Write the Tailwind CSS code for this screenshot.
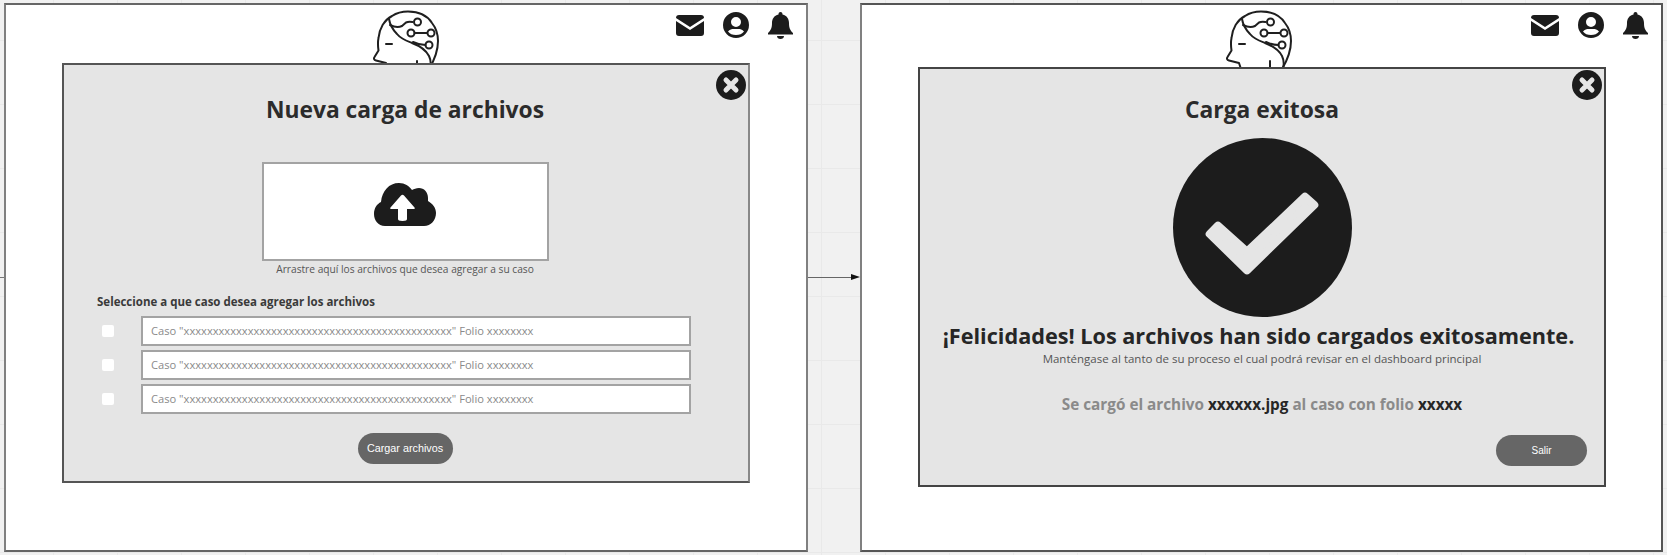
<!DOCTYPE html>
<html lang="es">
<head>
  <meta charset="UTF-8" />
  <title>Carga de archivos</title>
  <script src="https://cdn.jsdelivr.net/npm/@tailwindcss/browser@4"></script>
</head>
<body class="h-[555px] w-[1667px] overflow-hidden bg-[#f1f1f1] bg-[linear-gradient(#e9e9e9_1px,transparent_1px),linear-gradient(90deg,#e9e9e9_1px,transparent_1px)] bg-size-[64px_64px] bg-position-[53px_40px] font-['Open_Sans',sans-serif] text-[#1f1f1f]">

  <svg class="hidden">
    <symbol id="brain" viewBox="370 8 72 60" fill="none" stroke="currentColor" stroke-width="2" stroke-linecap="round" stroke-linejoin="round">
      <path d="M388 68 L386 62 L376 59.500 C374 59 373.500 57.500 374.500 56 L378.500 49.500 C378 46 377.500 42 378.500 37 C379.500 28 384 19 392 15 C396.500 12 402 10.500 408 10.500 C418 10.500 427 14 432 22 C436 27 438 33 438 40 C438 50 435 58 429 68" />
      <path d="M389 18 C390 24 393 29 397 33 C401 38 407 40 412 42 C420 45 426 49 429 55 C431 59 431 64 430 68" />
      <path d="M390 24 C394 26 398 27 402 25 L406 21.500 C408 20.500 410 20.500 412.500 21" />
      <circle cx="417.500" cy="21" r="3.500" fill="white" />
      <circle cx="411" cy="32" r="3.500" fill="white" />
      <path d="M414.500 32 H427.500" />
      <circle cx="431" cy="32" r="3.500" fill="white" />
      <circle cx="429" cy="44" r="3.500" fill="white" />
      <path d="M425.500 44 C421 44 417 43 413 41" />
      <path d="M386 43 H392" />
      <path d="M417 60 V68" />
    </symbol>
    <symbol id="close" viewBox="0 0 30 30">
      <circle cx="15" cy="15" r="15" fill="#1c1c1c" />
      <path d="M10 10 L20 20 M20 10 L10 20" stroke="#e5e5e5" stroke-width="5" stroke-linecap="round" />
    </symbol>
  </svg>

  <div class="relative flex h-full pt-[3px] pl-1">
    <div class="absolute left-0 top-[277px] h-px w-1 bg-[#777]"></div>

    <!-- Pantalla 1 -->
    <section class="relative h-[549px] w-[804px] shrink-0 border-2 border-[#666] border-x-[#808080] bg-white">
      <svg class="absolute left-[364px] top-[4px] h-[60px] w-[72px]"><use href="#brain" /></svg>

      <div class="absolute right-[13px] top-[7px] flex items-start gap-[19px] text-[#1c1c1c]">
        <svg class="mt-[3px] h-[21px] w-[28px]" viewBox="0 0 28 21" fill="currentColor"><path d="M3 0 H25 C27 0 28 1 28 3 L14 12 L0 3 C0 1 1 0 3 0 Z M0 6 L14 15 L28 6 V18 C28 20 27 21 25 21 H3 C1 21 0 20 0 18 Z" /></svg>
        <svg class="h-[26px] w-[26px]" viewBox="0 0 26 26" fill="currentColor"><path fill-rule="evenodd" d="M13 0 A13 13 0 1 0 13 26 A13 13 0 1 0 13 0 Z M13 5 A5 5 0 1 1 13 15 A5 5 0 1 1 13 5 Z M13 23 C9.5 23 6.8 21.6 5 19.4 C6.6 17.6 9 17 10.5 17 H15.5 C17 17 19.4 17.6 21 19.4 C19.200 21.6 16.5 23 13 23 Z" /></svg>
        <svg class="h-[27px] w-[25px]" viewBox="0 0 25 27" fill="currentColor"><path d="M12.500 0 C14 0 14.500 1 14.500 2.500 C19 3.500 21 7 21 11 C21 16 22 18 25 21 V22.500 H0 V21 C3 18 4 16 4 11 C4 7 6 3.500 10.500 2.500 C10.500 1 11 0 12.500 0 Z M9 24 H16 C16 26 14.500 27 12.500 27 C10.500 27 9 26 9 24 Z" /></svg>
      </div>

      <div class="absolute left-[56px] top-[58px] flex h-[420px] w-[688px] flex-col items-center border-2 border-[#555] border-r-[#888] bg-[#e5e5e5] pr-[2px]">
        <svg class="absolute right-[2px] top-[5px] h-[30px] w-[30px]"><use href="#close" /></svg>
        <h2 class="mt-[29px] text-[22.8px] leading-[32px] font-bold text-[#2b2b2b]">Nueva carga de archivos</h2>

        <div class="mt-[36px] flex h-[99px] w-[287px] items-center justify-center border-2 border-[#a3a3a3] bg-white">
          <svg class="mb-[15px] h-[43px] w-[62px]" viewBox="0 0 62 43" fill="#1c1c1c">
            <path d="M11 43 C4 43 0 37 0 31 C0 25 3 21 7 19 C8 8 15 0 25 0 C31 0 35 3 38 7 C40 6 42 5 45 5 C50 5 54 9 54 15 C54 16 54 17 54 18 C59 21 62 25 62 30 C62 37 57 43 50 43 Z" />
            <path fill="white" d="M24 36 V26 H17 C16 26 16 25 16.500 24.500 L27 12.500 C28 11.500 29 11.500 30 12.500 L40.500 24.500 C41 25 41 26 40 26 H33 V36 C33 37 32 38 28.500 38 C25 38 24 37 24 36 Z" />
          </svg>
        </div>
        <p class="mt-[1px] text-[10.2px] leading-[14px] text-[#555]">Arrastre aquí los archivos que desea agregar a su caso</p>

        <div class="mt-[18px] w-full pl-[33px]">
          <p class="text-[11.5px] leading-[16px] font-bold text-[#3a3a3a]">Seleccione a que caso desea agregar los archivos</p>
          <div class="mt-[6px] flex flex-col gap-[4px]">
            <div class="flex items-center">
              <span class="ml-[5px] h-[12px] w-[12px] rounded-[2px] bg-white"></span>
              <div class="ml-[27px] flex h-[30px] w-[550px] items-center border-2 border-[#a3a3a3] bg-white pl-[8px] text-[11.15px] text-[#8a8a8a]">Caso "xxxxxxxxxxxxxxxxxxxxxxxxxxxxxxxxxxxxxxxxxxxxxx" Folio xxxxxxxx</div>
            </div>
            <div class="flex items-center">
              <span class="ml-[5px] h-[12px] w-[12px] rounded-[2px] bg-white"></span>
              <div class="ml-[27px] flex h-[30px] w-[550px] items-center border-2 border-[#a3a3a3] bg-white pl-[8px] text-[11.15px] text-[#8a8a8a]">Caso "xxxxxxxxxxxxxxxxxxxxxxxxxxxxxxxxxxxxxxxxxxxxxx" Folio xxxxxxxx</div>
            </div>
            <div class="flex items-center">
              <span class="ml-[5px] h-[12px] w-[12px] rounded-[2px] bg-white"></span>
              <div class="ml-[27px] flex h-[30px] w-[550px] items-center border-2 border-[#a3a3a3] bg-white pl-[8px] text-[11.15px] text-[#8a8a8a]">Caso "xxxxxxxxxxxxxxxxxxxxxxxxxxxxxxxxxxxxxxxxxxxxxx" Folio xxxxxxxx</div>
            </div>
          </div>
        </div>

        <button class="mt-[19px] h-[31px] w-[95px] rounded-full bg-[#666] font-['Liberation_Sans',sans-serif] text-[10.8px] text-white">Cargar archivos</button>
      </div>
    </section>

    <!-- Flecha -->
    <div class="flex w-[52px] shrink-0 items-start pt-[274px]">
      <div class="h-px w-[43px] bg-[#666]"></div>
      <div class="mt-[-3px] h-0 w-0 border-y-[3.5px] border-l-[9px] border-y-transparent border-l-[#111]"></div>
    </div>

    <!-- Pantalla 2 -->
    <section class="relative h-[549px] w-[803px] shrink-0 border-2 border-[#555] border-l-[#808080] bg-white">
      <svg class="absolute left-[361px] top-[4px] h-[60px] w-[72px]"><use href="#brain" /></svg>

      <div class="absolute right-[13px] top-[7px] flex items-start gap-[19px] text-[#1c1c1c]">
        <svg class="mt-[3px] h-[21px] w-[28px]" viewBox="0 0 28 21" fill="currentColor"><path d="M3 0 H25 C27 0 28 1 28 3 L14 12 L0 3 C0 1 1 0 3 0 Z M0 6 L14 15 L28 6 V18 C28 20 27 21 25 21 H3 C1 21 0 20 0 18 Z" /></svg>
        <svg class="h-[26px] w-[26px]" viewBox="0 0 26 26" fill="currentColor"><path fill-rule="evenodd" d="M13 0 A13 13 0 1 0 13 26 A13 13 0 1 0 13 0 Z M13 5 A5 5 0 1 1 13 15 A5 5 0 1 1 13 5 Z M13 23 C9.5 23 6.8 21.6 5 19.4 C6.6 17.6 9 17 10.5 17 H15.5 C17 17 19.4 17.6 21 19.4 C19.200 21.6 16.5 23 13 23 Z" /></svg>
        <svg class="h-[27px] w-[25px]" viewBox="0 0 25 27" fill="currentColor"><path d="M12.500 0 C14 0 14.500 1 14.500 2.500 C19 3.500 21 7 21 11 C21 16 22 18 25 21 V22.500 H0 V21 C3 18 4 16 4 11 C4 7 6 3.500 10.500 2.500 C10.500 1 11 0 12.500 0 Z M9 24 H16 C16 26 14.500 27 12.500 27 C10.500 27 9 26 9 24 Z" /></svg>
      </div>

      <div class="absolute left-[56px] top-[62px] flex h-[420px] w-[688px] flex-col items-center border-2 border-[#444] bg-[#e5e5e5]">
        <svg class="absolute right-[2px] top-[1px] h-[30px] w-[30px]"><use href="#close" /></svg>
        <h2 class="mt-[25px] text-[22.8px] leading-[32px] font-bold text-[#2b2b2b]">Carga exitosa</h2>

        <svg class="mt-[12px] h-[179px] w-[179px] shrink-0" viewBox="0 0 179 179">
          <circle cx="89.500" cy="89.500" r="89.500" fill="#1c1c1c" />
          <polygon points="45,87.700 36.700,96 74,132.300 141.300,67 132,58.700 74,113.700" fill="#e5e5e5" stroke="#e5e5e5" stroke-width="8" stroke-linejoin="round" />
        </svg>

        <p class="mt-[3px] mr-[7px] text-[21.65px] leading-[32px] font-bold text-[#262626]">¡Felicidades! Los archivos han sido cargados exitosamente.</p>
        <p class="text-[11.5px] leading-[14px] text-[#555]">Manténgase al tanto de su proceso el cual podrá revisar en el dashboard principal</p>
        <p class="mt-[28px] text-[15.3px] leading-[20px] font-bold text-[#8a8a8a]">Se cargó el archivo <span class="text-[#262626]">xxxxxx.jpg</span> al caso con folio <span class="text-[#262626]">xxxxx</span></p>

        <button class="mt-[21px] mr-[17px] h-[31px] w-[91px] self-end rounded-full bg-[#666] font-['Liberation_Sans',sans-serif] text-[10px] text-white">Salir</button>
      </div>
    </section>
  </div>
</body>
</html>
